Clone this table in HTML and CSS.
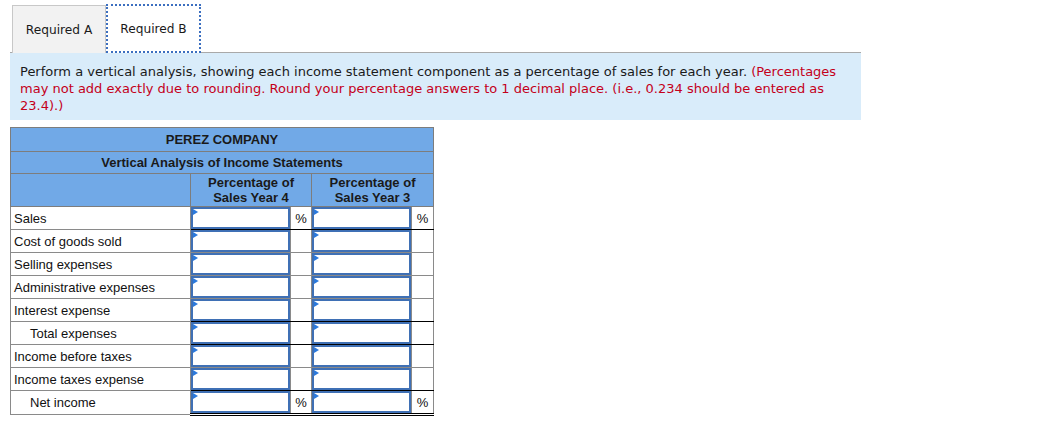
FILE: index.html
```html
<!DOCTYPE html>
<html>
<head>
<meta charset="utf-8">
<link rel="stylesheet" href="styles.css">
</head>
<body>
<div class="page">
  <div class="tabs">
    <div class="tab">Required A</div>
    <div class="tab active">Required B</div>
  </div>
  <div class="instructions">
    Perform a vertical analysis, showing each income statement component as a percentage of sales for each year. <span class="red">(Percentages may not add exactly due to rounding. Round your percentage answers to 1 decimal place. (i.e., 0.234 should be entered as 23.4).)</span>
  </div>
  <table class="sheet">
    <colgroup>
      <col class="c-label"><col class="c-in"><col class="c-pct"><col class="c-in"><col class="c-pct2">
    </colgroup>
    <tr class="h1"><th colspan="5">PEREZ COMPANY</th></tr>
    <tr class="h2"><th colspan="5">Vertical Analysis of Income Statements</th></tr>
    <tr class="h3"><th></th><th colspan="2">Percentage of<br>Sales Year 4</th><th colspan="2">Percentage of<br>Sales Year 3</th></tr>
    <tr class="dark"><td class="lbl">Sales</td><td class="in"><div class="box"></div></td><td class="pct">%</td><td class="in"><div class="box"></div></td><td class="pct">%</td></tr>
    <tr><td class="lbl">Cost of goods sold</td><td class="in"><div class="box"></div></td><td class="pct"></td><td class="in"><div class="box"></div></td><td class="pct"></td></tr>
    <tr><td class="lbl">Selling expenses</td><td class="in"><div class="box"></div></td><td class="pct"></td><td class="in"><div class="box"></div></td><td class="pct"></td></tr>
    <tr><td class="lbl">Administrative expenses</td><td class="in"><div class="box"></div></td><td class="pct"></td><td class="in"><div class="box"></div></td><td class="pct"></td></tr>
    <tr class="dark"><td class="lbl">Interest expense</td><td class="in"><div class="box"></div></td><td class="pct"></td><td class="in"><div class="box"></div></td><td class="pct"></td></tr>
    <tr class="dark"><td class="lbl indent">Total expenses</td><td class="in"><div class="box"></div></td><td class="pct"></td><td class="in"><div class="box"></div></td><td class="pct"></td></tr>
    <tr><td class="lbl">Income before taxes</td><td class="in"><div class="box"></div></td><td class="pct"></td><td class="in"><div class="box"></div></td><td class="pct"></td></tr>
    <tr class="dark"><td class="lbl">Income taxes expense</td><td class="in"><div class="box"></div></td><td class="pct"></td><td class="in"><div class="box"></div></td><td class="pct"></td></tr>
    <tr class="double"><td class="lbl indent">Net income</td><td class="in"><div class="box"></div></td><td class="pct">%</td><td class="in"><div class="box"></div></td><td class="pct">%</td></tr>
  </table>
</div>
</body>
</html>
```

FILE: styles.css
```css
html, body {
  margin: 0;
  padding: 0;
  background: #fff;
}
.page {
  padding: 4px 0 0 10px;
  width: 851px;
}
.tabs {
  display: flex;
  padding-left: 2px;
  border-bottom: 1px solid #a9a9a9;
  height: 48px;
}
.tab {
  box-sizing: border-box;
  width: 94px;
  height: 48px;
  margin-top: 1px;
  background: #f2f2f2;
  border: 1px solid #c8c8c8;
  border-bottom: none;
  font-family: "DejaVu Sans", Verdana, sans-serif;
  font-size: 12.2px;
  color: #1a1a1a;
  display: flex;
  align-items: center;
  justify-content: center;
}
.tab.active {
  width: 95px;
  height: 49px;
  margin-top: 0;
  background: #fff;
  border: 2px dotted #3c6fc0;
  margin-bottom: -1px;
}
.instructions {
  background: #d9ecfa;
  padding: 10px 10px 9px 10px;
  font-family: "DejaVu Sans", Verdana, sans-serif;
  font-size: 13px;
  line-height: 17px;
  color: #1a1a1a;
  height: 48px;
}
.red {
  color: #c4001a;
}
.sheet {
  margin-top: 7px;
  border-collapse: collapse;
  table-layout: fixed;
  width: 424px;
  font-family: "Liberation Sans", Arial, sans-serif;
  font-size: 13px;
  color: #111;
}
.c-label { width: 180px; }
.c-in { width: 100px; }
.c-pct { width: 21px; }
.c-pct2 { width: 22px; }
.sheet th {
  background: #71a9e7;
  border: 1px solid #7d7d7d;
  font-weight: bold;
  color: #1a1a1a;
  padding: 0;
  text-align: center;
}
.h1 th { height: 23px; }
.h2 th { height: 21px; }
.h3 th { height: 32px; line-height: 15px; }
.sheet td {
  border: 1px solid #8a8a8a;
  padding: 0;
  height: 22px;
}
.lbl {
  padding-left: 3px !important;
  white-space: nowrap;
}
.lbl.indent {
  padding-left: 19px !important;
}
.pct {
  text-align: center;
  font-size: 13px;
}
.in {
  position: relative;
}
.box {
  box-sizing: border-box;
  height: 22px;
  border: 2px solid #3f70b5;
  position: relative;
  background: #fff;
}
.box::before {
  content: "";
  position: absolute;
  left: 0;
  top: 0;
  border-top: 3px solid transparent;
  border-bottom: 3px solid transparent;
  border-left: 5px solid #2b79dc;
}
.dark td.in, .dark td.pct {
  border-bottom: 1px solid #000;
}
.double td.in, .double td.pct {
  border-bottom: 3px double #000;
}
```
